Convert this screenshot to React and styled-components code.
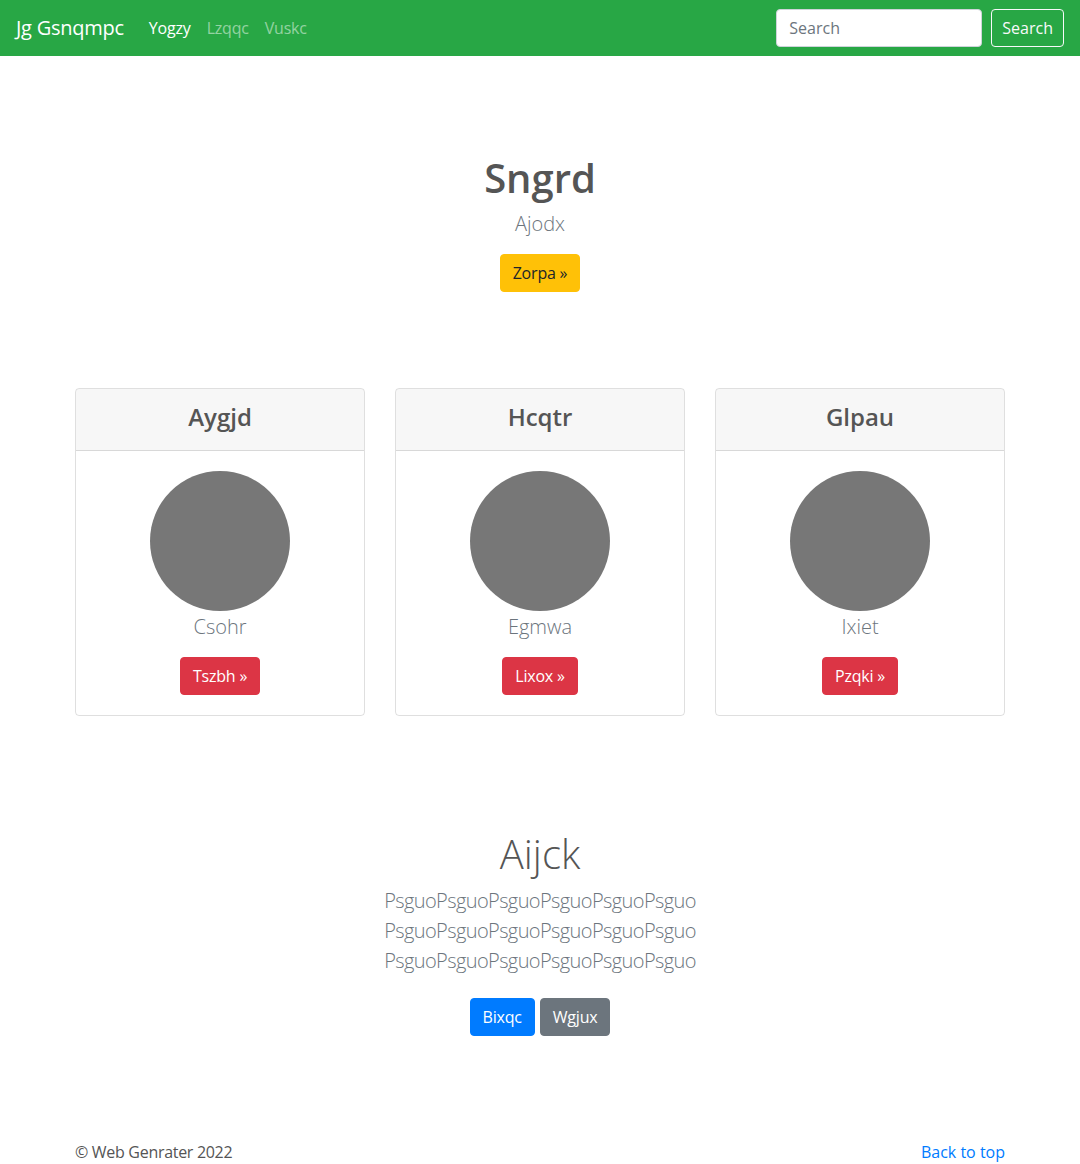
import React from "react";
import styled, { createGlobalStyle } from "styled-components";

const GlobalStyle = createGlobalStyle`
  * { box-sizing: border-box; }
  body {
    margin: 0;
    font-family: "Segoe UI", "Open Sans", "Noto Sans", sans-serif;
    font-size: 16px;
    line-height: 1.5;
    color: #212529;
    background: #fff;
  }
`;

const cards = [
  { title: "Aygjd", name: "Csohr", action: "Tszbh" },
  { title: "Hcqtr", name: "Egmwa", action: "Lixox" },
  { title: "Glpau", name: "Ixiet", action: "Pzqki" },
];

function App() {
  return (
    <>
      <GlobalStyle />
      <Navbar>
        <Brand>Jg Gsnqmpc</Brand>
        <NavLinks>
          <NavLink active>Yogzy</NavLink>
          <NavLink>Lzqqc</NavLink>
          <NavLink>Vuskc</NavLink>
        </NavLinks>
        <SearchForm>
          <SearchInput placeholder="Search" />
          <OutlineButton>Search</OutlineButton>
        </SearchForm>
      </Navbar>

      <Hero>
        <HeroTitle>Sngrd</HeroTitle>
        <Lead>Ajodx</Lead>
        <Button variant="warning">Zorpa »</Button>
      </Hero>

      <CardRow>
        {cards.map((c) => (
          <Card key={c.title}>
            <CardHeader>
              <CardTitle>{c.title}</CardTitle>
            </CardHeader>
            <CardBody>
              <Avatar />
              <CardName>{c.name}</CardName>
              <Button variant="danger">{c.action} »</Button>
            </CardBody>
          </Card>
        ))}
      </CardRow>

      <About>
        <AboutTitle>Aijck</AboutTitle>
        <AboutText>
          PsguoPsguoPsguoPsguoPsguoPsguo
          <br />
          PsguoPsguoPsguoPsguoPsguoPsguo
          <br />
          PsguoPsguoPsguoPsguoPsguoPsguo
        </AboutText>
        <ButtonGroup>
          <Button variant="primary">Bixqc</Button>
          <Button variant="secondary">Wgjux</Button>
        </ButtonGroup>
      </About>

      <Footer>
        <FooterText>© Web Genrater 2022</FooterText>
        <FooterLink href="#">Back to top</FooterLink>
      </Footer>
    </>
  );
}

const colors = {
  warning: { bg: "#ffc107", fg: "#212529" },
  danger: { bg: "#dc3545", fg: "#fff" },
  primary: { bg: "#007bff", fg: "#fff" },
  secondary: { bg: "#6c757d", fg: "#fff" },
};

const Navbar = styled.nav`
  display: flex;
  align-items: center;
  height: 56px;
  padding: 0 16px;
  background: #28a745;
`;

const Brand = styled.a`
  font-size: 20px;
  color: #fff;
  margin-right: 17px;
  line-height: 30px;
  letter-spacing: -0.25px;
`;

const NavLinks = styled.div`
  display: flex;
  flex: 1;
`;

const NavLink = styled.a`
  padding: 8px;
  color: ${(p) => (p.active ? "#fff" : "rgba(255,255,255,0.5)")};
  font-size: 16px;
  letter-spacing: -0.2px;
`;

const SearchForm = styled.form`
  display: flex;
  align-items: center;
  gap: 9px;
`;

const SearchInput = styled.input`
  width: 206px;
  height: 38px;
  padding: 6px 12px;
  font: inherit;
  color: #495057;
  border: 1px solid #ced4da;
  border-radius: 4px;
  &::placeholder { color: #6c757d; }
`;

const OutlineButton = styled.button`
  height: 38px;
  padding: 6px 10px;
  font: inherit;
  color: #f8f9fa;
  background: transparent;
  border: 1px solid #f8f9fa;
  border-radius: 4px;
`;

const Hero = styled.section`
  display: flex;
  flex-direction: column;
  align-items: center;
  padding-top: 98px;
`;

const HeroTitle = styled.h1`
  margin: 0 0 7px;
  font-size: 40px;
  font-weight: 600;
  line-height: 1.2;
  color: #555;
`;

const Lead = styled.p`
  margin: 0 0 15px;
  font-size: 20px;
  font-weight: 300;
  line-height: 30px;
  color: #6c757d;
`;

const Button = styled.button`
  height: 38px;
  padding: 6px 12px;
  font: inherit;
  line-height: 24px;
  letter-spacing: -0.2px;
  color: ${(p) => colors[p.variant].fg};
  background: ${(p) => colors[p.variant].bg};
  border: 1px solid ${(p) => colors[p.variant].bg};
  border-radius: 4px;
`;

const CardRow = styled.div`
  display: grid;
  grid-template-columns: repeat(3, 290px);
  gap: 30px;
  justify-content: center;
  margin-top: 96px;
`;

const Card = styled.div`
  border: 1px solid rgba(0, 0, 0, 0.125);
  border-radius: 4px;
  overflow: hidden;
`;

const CardHeader = styled.div`
  padding: 14px 20px 10px;
  background: rgba(0, 0, 0, 0.03);
  border-bottom: 1px solid rgba(0, 0, 0, 0.125);
  text-align: center;
`;

const CardTitle = styled.h4`
  margin: 0 0 8px;
  font-size: 24px;
  font-weight: 600;
  line-height: 1.2;
  color: #555;
`;

const CardBody = styled.div`
  display: flex;
  flex-direction: column;
  align-items: center;
  padding: 20px;
`;

const Avatar = styled.div`
  width: 140px;
  height: 140px;
  border-radius: 50%;
  background: #777;
`;

const CardName = styled.p`
  margin: 1px 0 15px;
  font-size: 20px;
  font-weight: 300;
  line-height: 30px;
  color: #6c757d;
`;

const About = styled.section`
  display: flex;
  flex-direction: column;
  align-items: center;
  margin-top: 114px;
`;

const AboutTitle = styled.h2`
  margin: 0 0 8px;
  font-size: 40px;
  font-weight: 300;
  line-height: 1.2;
  color: #555;
`;

const AboutText = styled.p`
  margin: 0 0 22px;
  font-size: 20px;
  font-weight: 300;
  line-height: 30px;
  letter-spacing: -0.6px;
  color: #6c757d;
  text-align: center;
`;

const ButtonGroup = styled.div`
  display: flex;
  gap: 5px;
`;

const Footer = styled.footer`
  display: flex;
  justify-content: space-between;
  width: 930px;
  margin: 104px auto 0;
  padding-bottom: 16px;
`;

const FooterText = styled.p`
  margin: 0;
  color: #555;
  letter-spacing: -0.3px;
`;

const FooterLink = styled.a`
  color: #007bff;
  text-decoration: none;
`;

export default App;
